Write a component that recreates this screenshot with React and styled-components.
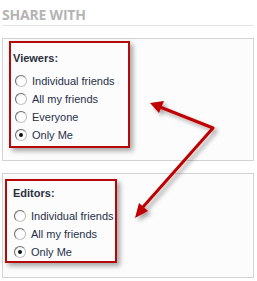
import styled, { createGlobalStyle } from "styled-components";

const GlobalStyle = createGlobalStyle`
    body {
        margin: 0;
        background: #ffffff;
        font-family: "Liberation Sans", Arial, sans-serif;
    }
`;

const Page = styled.div`
    position: relative;
    width: 252px;
    height: 281px;
    margin-left: 2px;
    padding-top: 6px;
    box-sizing: border-box;
`;

const Title = styled.h2`
    margin: 0;
    padding-bottom: 2px;
    border-bottom: 1px solid #e4e4e4;
    font-family: "Open Sans", sans-serif;
    font-size: 14px;
    font-weight: 700;
    line-height: 17px;
    color: #b4b4b4;
    letter-spacing: -0.2px;
`;

const Panel = styled.section`
    position: relative;
    margin-top: 12px;
    padding: 12px 10px 16px 10px;
    border: 1px solid #d2d2d2;
    background: #fcfcfc;
`;

const Label = styled.div`
    font-size: 11px;
    font-weight: 700;
    line-height: 14px;
    color: #2a2f3d;
    margin-bottom: 7px;
`;

const Option = styled.label`
    display: flex;
    align-items: center;
    gap: 5px;
    height: 18px;
    margin-left: ${(p) => p.$shift}px;
    font-size: 11px;
    color: #27304a;
`;

const Radio = styled.span`
    position: relative;
    width: 10px;
    height: 10px;
    border-radius: 50%;
    border: 1px solid #6b6b6b;
    border-right-color: #b9b9b9;
    border-bottom-color: #c4c4c4;
    background: radial-gradient(circle at 65% 65%, #ffffff 40%, #e6e6e6 100%);

    &::after {
        content: "";
        display: ${(p) => (p.$on ? "block" : "none")};
        position: absolute;
        left: 3px;
        top: 3px;
        width: 4px;
        height: 4px;
        border-radius: 50%;
        background: #111;
    }
`;

const Marker = styled.div`
    position: absolute;
    left: ${(p) => p.$x}px;
    top: ${(p) => p.$y}px;
    width: ${(p) => p.$w}px;
    height: ${(p) => p.$h}px;
    box-sizing: border-box;
    border: 2px solid #b40a0a;
    box-shadow: 3px 3px 5px rgba(0, 0, 0, 0.35);
    pointer-events: none;
`;

const Arrows = styled.svg`
    position: absolute;
    left: -2px;
    top: 0;
    overflow: visible;
    pointer-events: none;
`;

const Group = ({ title, options, shift, mark }) => (
    <Panel>
        <Marker $x={mark.x} $y={mark.y} $w={mark.w} $h={mark.h} />
        <Label>{title}</Label>
        {options.map((o) => (
            <Option key={o} $shift={shift}>
                <Radio $on={o === "Only Me"} />
                {o}
            </Option>
        ))}
    </Panel>
);

const App = () => {
    return (
        <>
            <GlobalStyle />
            <Page>
                <Title>SHARE WITH</Title>
                <Group
                    title="Viewers:"
                    options={["Individual friends", "All my friends", "Everyone", "Only Me"]}
                    shift={2}
                    mark={{ x: 6, y: 2, w: 121, h: 107 }}
                />
                <Group
                    title="Editors:"
                    options={["Individual friends", "All my friends", "Only Me"]}
                    shift={1}
                    mark={{ x: 2, y: 5, w: 112, h: 84 }}
                />
                <Arrows width="257" height="281">
                    <defs>
                        <filter id="sh" x="-20%" y="-20%" width="140%" height="140%">
                            <feDropShadow dx="3" dy="3" stdDeviation="2" floodColor="#000" floodOpacity="0.35" />
                        </filter>
                    </defs>
                    <g filter="url(#sh)" fill="#c00000" stroke="#c00000">
                        <path d="M213 128 L160 107 M213 128 L143 207" strokeWidth="3" fill="none" strokeLinecap="round" />
                        <polygon points="150,103 164,101 159,113" stroke="none" />
                        <polygon points="135,218 139,203 148,211" stroke="none" />
                    </g>
                </Arrows>
            </Page>
        </>
    );
};

export default App;
